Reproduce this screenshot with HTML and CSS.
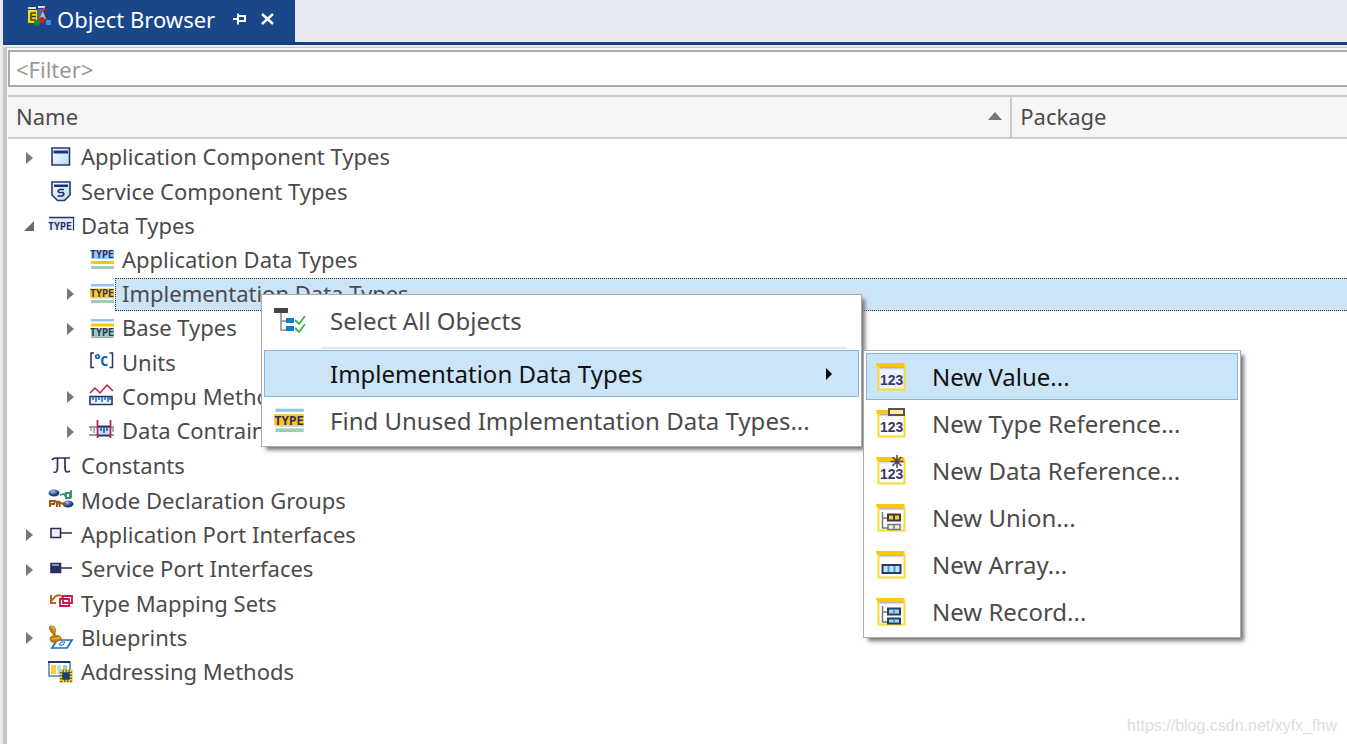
FILE: index.html
```html
<!DOCTYPE html>
<html lang="en">
<head>
<meta charset="utf-8">
<title>Object Browser</title>
<link rel="stylesheet" href="styles.css">
</head>
<body>
<svg class="defs" aria-hidden="true">
  <defs>
    <linearGradient id="sky" x1="0" y1="0" x2="1" y2="1"><stop offset="0" stop-color="#fff"/><stop offset="1" stop-color="#b5daf5"/></linearGradient>
    <linearGradient id="fade" x1="0" y1="0" x2="0" y2="1"><stop offset="0" stop-color="#777"/><stop offset="1" stop-color="#fff" stop-opacity="0"/></linearGradient>
    <radialGradient id="ball" cx=".4" cy=".3"><stop offset="0" stop-color="#a9c4ec"/><stop offset="1" stop-color="#173a7d"/></radialGradient>
    <symbol id="board" viewBox="0 0 32 32">
      <path d="M3.500 6V28.500H29.500V5" fill="#fff" fill-opacity=".6" stroke="#fdd82f" stroke-width="2"/>
      <path d="M4.500 6h24v4h-24z" fill="url(#fade)" opacity=".7"/>
      <path d="M1 2h28.500v4h-27.500z" fill="#fcc800"/>
    </symbol>
    <symbol id="impl" viewBox="0 0 26 22">
      <path d="M2 1h23v2.500H2z" fill="#91c4f6"/><path d="M1 5.500h24v9H1z" fill="#fcc61a"/><path d="M2 14.500h23v1H2z" fill="#999" opacity=".6"/><path d="M2 17h23v3H2z" fill="#9acfb3"/>
      <text class="type-text" x="1" y="14">TYPE</text>
    </symbol>
  </defs>
</svg>
<main class="panel">
  <header class="tabs">
    <div class="tab">
      <svg class="app-icon" viewBox="0 0 26 24" aria-hidden="true"><path d="M1 2h8v2H1zM11 1h7v2h-7z" fill="#d6e3f5"/><path d="M1 5h9v13H1z" fill="#ffd500"/><path d="M4 8h5M4 8v7h5M5 11.500h4" stroke="#333c3a" stroke-width="1.500" fill="none"/><path d="M10 4h6v14h-6z" fill="#506594"/><path d="M12 14l4-8 3 8z" fill="#c8b4a8"/><circle cx="17" cy="4" r="1.500" fill="#f22"/><circle cx="15" cy="15" r="3" fill="#ce1c22"/><circle cx="10" cy="18" r="3" fill="#168b2c"/><path d="M19 15h5v5h-5z" fill="#3494ed"/></svg>
      <span class="tab-title">Object Browser</span>
      <button class="tab-button" aria-label="Pin"><svg viewBox="0 0 14 12"><path d="M0 6h4M5 0.500v11M5 3h7v5H5" fill="none" stroke="#fff" stroke-width="2"/><path d="M5 7h8v2H5z" fill="#fff"/></svg></button>
      <button class="tab-button" aria-label="Close"><svg viewBox="0 0 14 12"><path d="M1 1l11 10M12 1L1 11" fill="none" stroke="#fff" stroke-width="2.400"/></svg></button>
    </div>
  </header>
  <section class="content">
    <div class="filter"><input type="text" placeholder="&lt;Filter&gt;" aria-label="Filter"></div>
    <div class="columns">
      <button class="column name-column">Name <svg viewBox="0 0 14 8" aria-hidden="true"><path d="M0 8L7 0l7 8z"/></svg></button>
      <button class="column">Package</button>
    </div>
    <ul class="tree" role="tree">
      <li><div class="row"><button class="expander" aria-label="Expand"></button><svg class="icon" viewBox="0 0 26 22"><path d="M4 1h17.500v17H4z" fill="url(#sky)" stroke="#27366f" stroke-width="1.600"/><path d="M5.500 3.500h14.500v3H5.500z" fill="#17357e"/></svg><span class="label">Application Component Types</span></div></li>
      <li><div class="row"><span class="expander-space"></span><svg class="icon" viewBox="0 0 26 22"><path d="M4 1h18v13l-5.500 5.500h-7L4 14z" fill="url(#sky)" stroke="#27366f" stroke-width="1.600"/><path d="M6 3.500h14v2.500H6z" fill="#17357e"/><path d="M16 8.500h-4.500l-1.500 1.500 1 1.500h4l1 1.500-1.500 2H9.500" fill="none" stroke="#222b60" stroke-width="1.600"/></svg><span class="label">Service Component Types</span></div></li>
      <li>
        <div class="row"><button class="expander open" aria-label="Collapse"></button><svg class="icon" viewBox="0 0 26 22"><path d="M1 3h23v12H1z" fill="#dcecfa"/><path d="M1 2.500h24.500v13" fill="none" stroke="#2b2f6c" stroke-width="1.300"/><text class="type-text" x="0" y="15">TYPE</text></svg><span class="label">Data Types</span></div>
        <ul>
          <li><div class="row"><span class="expander-space"></span><svg class="icon" viewBox="0 0 26 22"><path d="M2 1h23v9H2z" fill="#9accf7"/><path d="M2 12h23v3H2z" fill="#fcc800"/><path d="M2 17h23v3H2z" fill="#9acfb3"/><text class="type-text" x="1" y="9">TYPE</text></svg><span class="label">Application Data Types</span></div></li>
          <li><div class="row"><button class="expander" aria-label="Expand"></button><svg class="icon"><use href="#impl"/></svg><span class="label selected">Implementation Data Types</span></div></li>
          <li><div class="row"><button class="expander" aria-label="Expand"></button><svg class="icon" viewBox="0 0 26 22"><path d="M2 1h23v2.500H2z" fill="#91c4f6"/><path d="M2 5.500h23v3H2z" fill="#fcc800"/><path d="M2 10h23v9H2z" fill="#9acfb3"/><path d="M2 19h23v1H2z" fill="#aaa"/><text class="type-text" x="1" y="18">TYPE</text></svg><span class="label">Base Types</span></div></li>
          <li><div class="row"><span class="expander-space"></span><svg class="icon" viewBox="0 0 26 22"><path d="M5 1h-3v14.500h3M20.500 1h3v14.500h-3" fill="none" stroke="#292f6d" stroke-width="1.500"/><circle cx="8.500" cy="4.500" r="1.800" fill="none" stroke="#0864bd" stroke-width="1.600"/><text class="unit-text" x="11" y="14">C</text></svg><span class="label">Units</span></div></li>
          <li><div class="row"><button class="expander" aria-label="Expand"></button><svg class="icon" viewBox="0 0 26 22"><path d="M1 7l5-5 5 5 7-8 6 6" fill="none" stroke="#cc1748" stroke-width="1.500"/><path d="M1 10.500h22v8H1z" fill="#e5f2ff" stroke="#26366d" stroke-width="1.600"/><path d="M4 11v3M7 11v5M10 11v3M13 11v5M16 11v3M19 11v5M21 11v3" stroke="#1a63b8" stroke-width="1.500"/></svg><span class="label">Compu Methods</span></div></li>
          <li><div class="row"><button class="expander" aria-label="Expand"></button><svg class="icon" viewBox="0 0 26 22"><path d="M0 5h25v2H0zM0 13h25v2H0z" fill="#999"/><path d="M9 5h12v10H9z" fill="#c1e1fb"/><path d="M9 5.500h12M9 14.500h12" stroke="#293371" stroke-width="2"/><path d="M2 6v4M5 6v6M24 6v5" stroke="#999" stroke-width="1.500"/><path d="M12 6v4M15 6v6M18 6v4" stroke="#1b51a1" stroke-width="1.500"/><path d="M8.500 -1v18M21.500 -1v18" stroke="#c91344" stroke-width="1.700"/></svg><span class="label">Data Contraints</span></div></li>
        </ul>
      </li>
      <li><div class="row"><span class="expander-space"></span><svg class="icon" viewBox="0 0 26 22"><path d="M4 4c1-2 2-2 4-2h14M9.500 2v9c0 4-1 6-4 5M17 2v10c0 4 2 5 5 3" fill="none" stroke="#2b2d66" stroke-width="1.700"/></svg><span class="label">Constants</span></div></li>
      <li><div class="row"><span class="expander-space"></span><svg class="icon" viewBox="0 0 26 22"><ellipse cx="6" cy="3" rx="5.500" ry="3.500" fill="url(#ball)"/><ellipse cx="20" cy="14" rx="5.500" ry="3.500" fill="url(#ball)"/><path d="M12 5l4-1 2 3V3h4v5h-5M23 0v8" fill="none" stroke="#328e72" stroke-width="1.800"/><path d="M2 17v-6h5l-1 3H3M9 11v6M12 17l-1-5 4 2h3" fill="none" stroke="#a45809" stroke-width="2"/></svg><span class="label">Mode Declaration Groups</span></div></li>
      <li><div class="row"><button class="expander" aria-label="Expand"></button><svg class="icon" viewBox="0 0 26 22"><path d="M3 4.500h9.500v9H3zM12 9h12" fill="#eee" stroke="#292b62" stroke-width="1.600"/></svg><span class="label">Application Port Interfaces</span></div></li>
      <li><div class="row"><button class="expander" aria-label="Expand"></button><svg class="icon" viewBox="0 0 26 22"><path d="M3 4.500h9.500v9H3zM12 9h12" fill="#292f60" stroke="#292b62" stroke-width="1.600"/><path d="M4 5h7v2H4z" fill="#8795bd"/></svg><span class="label">Service Port Interfaces</span></div></li>
      <li><div class="row"><span class="expander-space"></span><svg class="icon" viewBox="0 0 26 22"><path d="M3 2v8h5M3 8l5-5c4-2 7 0 7 4" fill="none" stroke="#b66b13" stroke-width="2"/><path d="M15 3h9v7h-9zM12 6h9v7h-9z" fill="none" stroke="#c61c4d" stroke-width="1.800"/></svg><span class="label">Type Mapping Sets</span></div></li>
      <li><div class="row"><button class="expander" aria-label="Expand"></button><svg class="icon" viewBox="0 0 26 22"><path d="M9 13h15l-5 8H4z" fill="#fff" stroke="#176bce" stroke-width="1.700"/><path d="M11 18l2-3h4l-2 3z" fill="none" stroke="#176bce"/><path d="M1 0c2-3 7-1 7 3 0 2-1 3 0 5 4 0 6 2 6 5l-9 3c-3-1-4-4-3-6l3-2C4 6 0 3 1 0z" fill="#b97b0c"/><path d="M3 0c2 0 3 2 3 4M4 12l8-1" fill="none" stroke="#edb53e" stroke-width="1.300"/></svg><span class="label">Blueprints</span></div></li>
      <li><div class="row"><span class="expander-space"></span><svg class="icon" viewBox="0 0 26 22"><path d="M1 0h21v14H1z" fill="#fff" stroke="#4f80bd" stroke-width="1.500"/><path d="M0 0h22" stroke="#25316c" stroke-width="2"/><path d="M3 3h5v9H3z" fill="#fcd126"/><path d="M9 3h4v9H9z" fill="#b9def6"/><path d="M15 3h4v6h-4z" fill="#9bd1bc"/><path d="M13 9h10v10H13z" fill="#17407c"/><path d="M13 9h10v10H13z" fill="none" stroke="#77681d" stroke-width="2.500"/><path d="M13 9h10v10H13z" fill="none" stroke="#ffd523" stroke-width="2.500" stroke-dasharray="1.500 1.500"/></svg><span class="label">Addressing Methods</span></div></li>
    </ul>
  </section>
  <div class="menu context-menu" role="menu">
    <button class="menu-item" role="menuitem"><svg class="menu-icon" viewBox="0 0 32 32"><path d="M1 3h14v5H1z" fill="#444"/><path d="M8 8v17h6M8 16h6" fill="none" stroke="#888" stroke-width="1.500"/><path d="M13 13h8v5h-8zM13 21h8v5h-8z" fill="#087fd5"/><path d="M22 15l4 4 6-8M22 23l4 4 6-8" fill="none" stroke="#3ab34a" stroke-width="1.800"/></svg>Select All Objects</button>
    <hr>
    <div class="submenu-anchor">
      <button class="menu-item active" role="menuitem" aria-haspopup="true" aria-expanded="true"><span class="menu-icon"></span>Implementation Data Types<svg class="submenu-arrow" viewBox="0 0 8 12"><path d="M1 0l6 6-6 6z"/></svg></button>
      <div class="menu submenu" role="menu">
        <button class="menu-item active" role="menuitem"><svg class="menu-icon" viewBox="0 0 32 32"><use href="#board"/><text class="digits" x="5" y="24">123</text></svg>New Value...</button>
        <button class="menu-item" role="menuitem"><svg class="menu-icon" viewBox="0 0 32 32"><use href="#board"/><text class="digits" x="5" y="24">123</text><path d="M14 1h15v6H14z" fill="#ffe9a0" stroke="#555" stroke-width="2"/></svg>New Type Reference...</button>
        <button class="menu-item" role="menuitem"><svg class="menu-icon" viewBox="0 0 32 32"><use href="#board"/><text class="digits" x="5" y="24">123</text><path d="M22 0v13M15.500 6.500h13M17.500 2l9 9M26.500 2l-9 9" stroke="#4b4550" stroke-width="1.500"/></svg>New Data Reference...</button>
        <button class="menu-item" role="menuitem"><svg class="menu-icon" viewBox="0 0 32 32"><use href="#board"/><path d="M7.500 10v16h6M7.500 16h6" fill="none" stroke="#777" stroke-width="1.500"/><path d="M13 12.500h12v6H13z" fill="#ffcc16" stroke="#3a3754" stroke-width="2"/><path d="M19 13v5" stroke="#444" stroke-width="2"/><path d="M13 22.500h12v5H13zM19 22v6" fill="#eee" stroke="#777" stroke-width="1.500"/></svg>New Union...</button>
        <button class="menu-item" role="menuitem"><svg class="menu-icon" viewBox="0 0 32 32"><use href="#board"/><path d="M7.500 16h18v8h-18z" fill="#b8e5fc" stroke="#28386c" stroke-width="2"/><path d="M13.500 17v6M19.500 17v6" stroke="#4b99d1" stroke-width="2"/></svg>New Array...</button>
        <button class="menu-item" role="menuitem"><svg class="menu-icon" viewBox="0 0 32 32"><use href="#board"/><path d="M7.500 10v16h6M7.500 16h6" fill="none" stroke="#777" stroke-width="1.500"/><path d="M13 12.500h12v6H13zM13 22.500h12v5H13z" fill="#9bd8fa" stroke="#303960" stroke-width="2"/><path d="M19 14v3M19 24v3" stroke="#4b99d1" stroke-width="2"/></svg>New Record...</button>
      </div>
    </div>
    <button class="menu-item" role="menuitem"><svg class="menu-icon"><use href="#impl"/></svg>Find Unused Implementation Data Types...</button>
  </div>
  <footer class="watermark">https://blog.csdn.net/xyfx_fhw</footer>
</main>
</body>
</html>
```
FILE: styles.css
```css
* { box-sizing: border-box; }
body {
  margin: 0;
  min-height: 100vh;
  background: #e7eaf0;
  color: #4b4b4b;
  font: 22px/30px "Noto Sans", sans-serif;
  overflow: hidden;
}
button, input { font: inherit; color: inherit; padding: 0; border: 0; background: none; }
ul { list-style: none; margin: 0; padding: 0; }
.defs { position: absolute; width: 0; height: 0; }
.panel { position: relative; display: flex; flex-direction: column; min-height: 100vh; padding-left: 3px; }
.tabs { display: flex; border-bottom: 3px solid #143e7c; }
.tab { display: flex; align-items: center; height: 42px; width: 292px; padding: 0 20px 4px 24px; background: #19478a; color: #fff; }
.app-icon { width: 26px; height: 24px; margin: -4px 4px 0 0; }
.tab-title { flex: 1; white-space: nowrap; }
.tab-button { display: flex; margin-left: 14px; }
.tab-button svg { width: 14px; height: 12px; }
.content { flex: 1; display: flex; flex-direction: column; margin-top: 2px; border-top: 1px solid #c8c8c8; border-left: 4px solid #c6c6c6; background: #fff; }
.filter { padding: 2px 0 8px 1px; background: #f6f6f6; }
.filter input { display: block; width: 100%; height: 37px; padding: 0 6px; background: #fff; border: 2px solid #ababab; border-right: 0; outline: 0; }
.filter input::placeholder { color: #999; opacity: 1; }
.columns { display: flex; height: 44px; margin-left: 1px; border: 2px solid #cdcdcd; border-width: 2px 0; background: #f6f6f6; }
.column { display: flex; flex: 1; align-items: center; padding: 0 8px 2px; }
.name-column { flex: 0 0 75%; justify-content: space-between; border-right: 2px solid #c9c9c9; }
.name-column svg { width: 14px; height: 8px; fill: #777; }
.tree { padding-top: 1px; }
.row { display: flex; align-items: center; height: 34px; padding-left: 12px; white-space: nowrap; }
.tree > li:nth-child(3n + 1) > .row, .tree ul > li:nth-child(3n) > .row { height: 35px; }
.tree ul .row { padding-left: 53px; }
.expander, .expander-space { flex: none; width: 20px; height: 20px; margin-right: 9px; }
.expander { display: flex; align-items: center; justify-content: center; }
.expander::before { content: ""; border-left: 7px solid #777; border-top: 6px solid transparent; border-bottom: 6px solid transparent; }
.expander.open::before { border: 0 solid transparent; border-left: 10px solid transparent; border-bottom: 10px solid #6c6c6c; }
.icon { flex: none; width: 26px; height: 22px; overflow: visible; }
.label { padding: 0 6px 2px; border: 1px solid transparent; line-height: 29px; }
.selected { flex: 1; background: #cce4f7; border: 1px dotted #333; border-right: 0; }
.type-text { font: bold 10px "DejaVu Sans Mono", monospace; fill: #302f5f; }
.unit-text { font: bold 14px "DejaVu Sans Mono", monospace; fill: #0864bd; }
.digits { font: bold 14px "Liberation Sans", sans-serif; fill: #39366f; }
.menu { position: absolute; padding: 2px; background: #fff; border: 1px solid #aaa; box-shadow: 4px 4px 4px -1px #777; font-size: 24px; }
.context-menu { left: 261px; top: 294px; width: 601px; }
.submenu-anchor { position: relative; }
.submenu { left: 599px; top: 0; width: 378px; }
.menu-item { display: flex; align-items: center; width: 100%; height: 47px; padding: 0 25px 0 8px; border: 1px solid transparent; white-space: nowrap; text-align: left; }
.menu-item.active { background: #cce4f7; border-color: #83b7ec; color: #111; }
.menu-icon { flex: none; width: 32px; height: 32px; margin-right: 25px; overflow: visible; }
.submenu-arrow { width: 8px; height: 12px; margin-left: auto; fill: #000; }
.menu hr { margin: 3px 12px 1px 57px; border: 0; border-top: 2px solid #e6e6e6; }
.watermark { position: absolute; right: 10px; bottom: 6px; color: #ddd; font: 16px/24px "Liberation Sans", sans-serif; }
```
